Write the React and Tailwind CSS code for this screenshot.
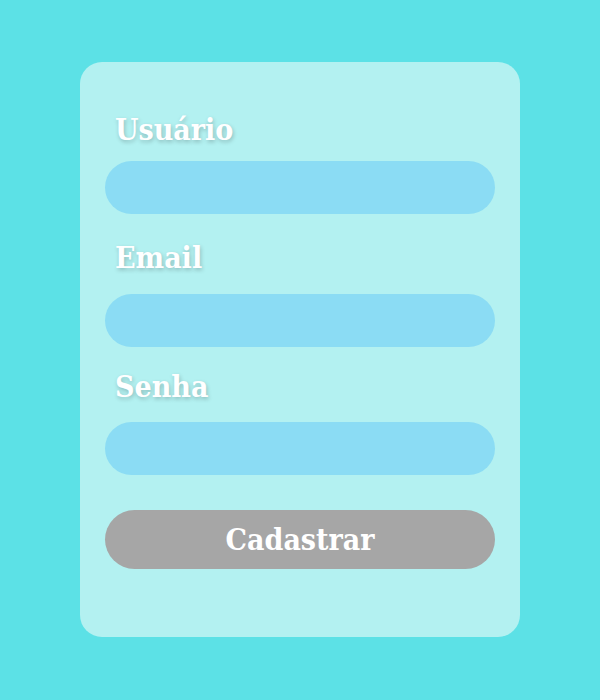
export default function App() {
  const label =
    "pl-[10px] text-[30px] font-bold leading-[34px] text-white [text-shadow:1px_2px_4px_rgba(0,0,0,0.22)]";
  const input = "block h-[53px] w-full rounded-full bg-[#8bdcf4] px-6 text-xl text-slate-700 outline-none";

  return (
    <div
      className="flex h-[700px] w-full justify-center bg-[#5ce1e6] pt-[62px]"
      style={{ fontFamily: '"DejaVu Serif Condensed", "DejaVu Serif", "Liberation Serif", serif' }}
    >
      <form className="flex h-[575px] w-[440px] flex-col rounded-[22px] bg-[#b3f1f1] px-[25px] pt-[51px]">
        <label className={label}>Usuário</label>
        <input type="text" className={`${input} mt-[14px]`} />

        <label className={`${label} mt-[27px]`}>Email</label>
        <input type="email" className={`${input} mt-[19px]`} />

        <label className={`${label} mt-[23px]`}>Senha</label>
        <input type="password" className={`${input} mt-[18px]`} />

        <button
          type="button"
          className="mt-[35px] h-[59px] w-full rounded-full bg-[#a6a6a6] text-[30px] font-bold text-white"
        >
          Cadastrar
        </button>
      </form>
    </div>
  );
}
